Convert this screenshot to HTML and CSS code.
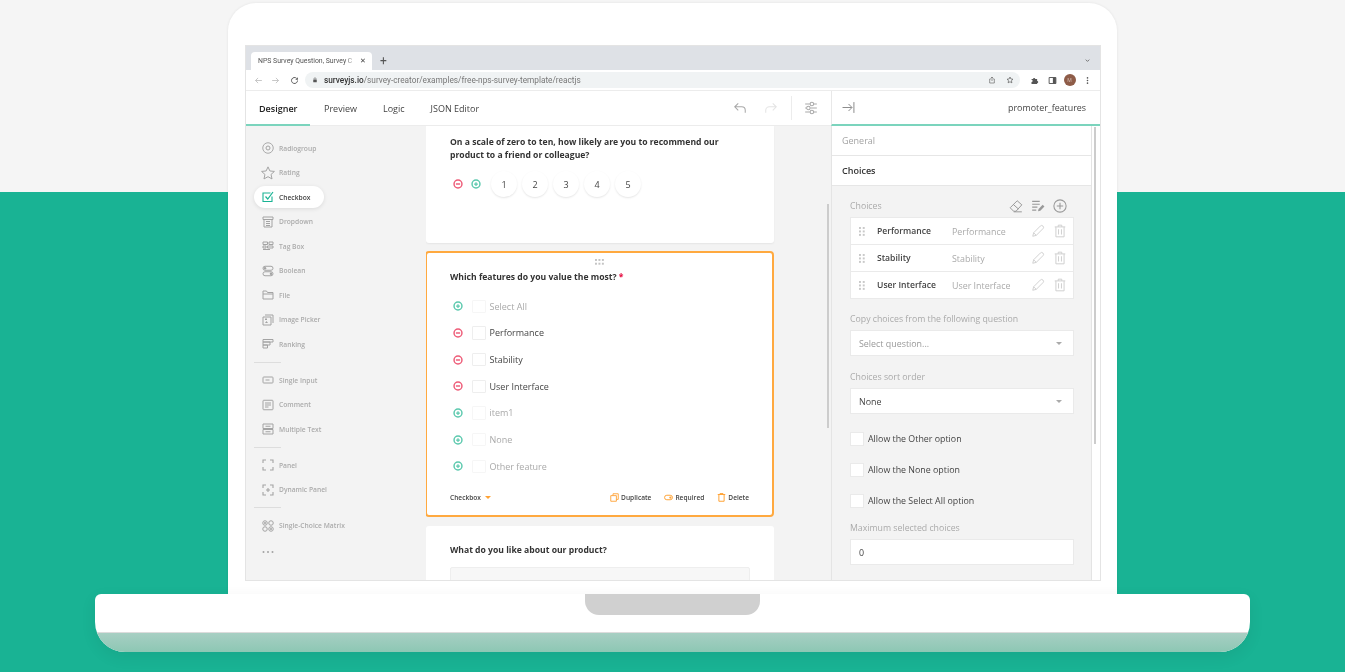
FILE: index.html
```html
<!DOCTYPE html>
<html lang="en">
<head>
<meta charset="utf-8">
<title>NPS Survey Question, Survey Creator</title>
<link rel="stylesheet" href="styles.css">
</head>
<body>
<svg class="defs" aria-hidden="true">
  <symbol id="i-plus" viewBox="0 0 24 24"><circle cx="12" cy="12" r="9.5" fill="none" stroke="currentColor" stroke-width="3.5"/><path d="M7.500 12h9M12 7.500v9" stroke="currentColor" stroke-width="3"/></symbol>
  <symbol id="i-minus" viewBox="0 0 24 24"><circle cx="12" cy="12" r="9.500" fill="none" stroke="currentColor" stroke-width="3.500"/><path d="M7 12h10" stroke="currentColor" stroke-width="3.500"/></symbol>
  <symbol id="i-radio" viewBox="0 0 24 24"><circle cx="12" cy="12" r="10.500" fill="none" stroke="currentColor" stroke-width="1.800"/><circle cx="12" cy="12" r="4" fill="none" stroke="currentColor" stroke-width="2"/></symbol>
  <symbol id="i-star" viewBox="0 0 24 24"><path d="M12 1.500l3.200 7 7.800.8-5.800 5.200 1.700 7.700L12 18.300l-6.900 3.900 1.700-7.700L1 9.300l7.800-.8z" fill="none" stroke="currentColor" stroke-width="1.700"/></symbol>
  <symbol id="i-check" viewBox="0 0 24 24"><path d="M20 11v10H2V4h15" fill="none" stroke="currentColor" stroke-width="2.200"/><path d="M7 11l4.500 5L22 2" fill="none" stroke="currentColor" stroke-width="2.400"/></symbol>
  <symbol id="i-drop" viewBox="0 0 24 24"><path d="M2 2h20v5H2zM4 7v15h16V7M8 11h8M8 15h8M8 19h8" fill="none" stroke="currentColor" stroke-width="2"/></symbol>
  <symbol id="i-tag" viewBox="0 0 24 24"><path d="M2 4h9v5H2zM14 4h8v5h-8zM2 12h6v4H2zM11 12h11v4H11zM2 19h14" fill="none" stroke="currentColor" stroke-width="2"/></symbol>
  <symbol id="i-bool" viewBox="0 0 24 24"><rect x="2" y="2.500" width="20" height="8" rx="4" fill="none" stroke="currentColor" stroke-width="2"/><rect x="2" y="13.500" width="20" height="8" rx="4" fill="none" stroke="currentColor" stroke-width="2"/><circle cx="6" cy="6.500" r="2.500" fill="currentColor"/><circle cx="18" cy="17.500" r="2.500" fill="currentColor"/></symbol>
  <symbol id="i-file" viewBox="0 0 24 24"><path d="M2 20V4h7l2 3h11v13zM2 10h20" fill="none" stroke="currentColor" stroke-width="2"/></symbol>
  <symbol id="i-image" viewBox="0 0 24 24"><path d="M2 6h16v16H2zM6 2h16v16" fill="none" stroke="currentColor" stroke-width="2"/><path d="M6 18l3-4 3 4zM6 9h4v3H6z" fill="currentColor"/></symbol>
  <symbol id="i-rank" viewBox="0 0 24 24"><path d="M2 3h20v5H2zM2 8h14v6H2zM2 14h9v6H2z" fill="none" stroke="currentColor" stroke-width="2"/></symbol>
  <symbol id="i-input" viewBox="0 0 24 24"><rect x="2" y="6" width="20" height="12" rx="1.500" fill="none" stroke="currentColor" stroke-width="2"/><path d="M7 12h8" stroke="currentColor" stroke-width="2"/></symbol>
  <symbol id="i-comment" viewBox="0 0 24 24"><rect x="2" y="2.500" width="20" height="19" rx="1.500" fill="none" stroke="currentColor" stroke-width="2"/><path d="M6 8h12M6 12h12M6 16h7" stroke="currentColor" stroke-width="2"/></symbol>
  <symbol id="i-multi" viewBox="0 0 24 24"><path d="M2 2h20v9H2zM2 13h20v9H2zM7 6.500h10M7 17.500h10" fill="none" stroke="currentColor" stroke-width="2"/></symbol>
  <symbol id="i-panel" viewBox="0 0 24 24"><path d="M2 8V2h6M16 2h6v6M22 16v6h-6M8 22H2v-6" fill="none" stroke="currentColor" stroke-width="2.200"/></symbol>
  <symbol id="i-dynamic" viewBox="0 0 24 24"><path d="M2 8V2h6M16 2h6v6M22 16v6h-6M8 22H2v-6M12 8v8M8 12h8" fill="none" stroke="currentColor" stroke-width="2.200"/></symbol>
  <symbol id="i-matrix" viewBox="0 0 24 24"><g fill="none" stroke="currentColor" stroke-width="2"><circle cx="6" cy="6" r="4.500"/><circle cx="18" cy="6" r="4.500"/><circle cx="6" cy="18" r="4.500"/><circle cx="18" cy="18" r="4.500"/></g><circle cx="6" cy="6" r="2" fill="currentColor"/><circle cx="18" cy="18" r="2" fill="currentColor"/></symbol>
  <symbol id="i-more" viewBox="0 0 24 24"><circle cx="3" cy="12" r="2" fill="currentColor"/><circle cx="12" cy="12" r="2" fill="currentColor"/><circle cx="21" cy="12" r="2" fill="currentColor"/></symbol>
  <symbol id="i-back" viewBox="0 0 24 24"><path d="M21 12H4M11 5l-7 7 7 7" fill="none" stroke="currentColor" stroke-width="2"/></symbol>
  <symbol id="i-fwd" viewBox="0 0 24 24"><path d="M3 12h17M13 5l7 7-7 7" fill="none" stroke="currentColor" stroke-width="2"/></symbol>
  <symbol id="i-reload" viewBox="0 0 24 24"><path d="M20 12a8 8 0 1 1-2.500-5.800" fill="none" stroke="currentColor" stroke-width="2.500"/><path d="M21 3v7h-7z" fill="currentColor"/></symbol>
  <symbol id="i-lock" viewBox="0 0 24 24"><rect x="5" y="10" width="14" height="11" rx="1.500" fill="currentColor"/><path d="M8 10V7a4 4 0 0 1 8 0v3" fill="none" stroke="currentColor" stroke-width="2.200"/></symbol>
  <symbol id="i-share" viewBox="0 0 24 24"><path d="M8 9H5v12h14V9h-3M12 15V3M8 7l4-4 4 4" fill="none" stroke="currentColor" stroke-width="2"/></symbol>
  <symbol id="i-bm" viewBox="0 0 24 24"><path d="M12 3l2.700 6 6.300.7-4.700 4.300 1.300 6.500-5.600-3.300-5.600 3.300L7.700 14 3 9.700 9.300 9z" fill="none" stroke="currentColor" stroke-width="2"/></symbol>
  <symbol id="i-puzzle" viewBox="0 0 24 24"><path d="M4 8h4a3 3 0 1 1 6 0h5v5a3 3 0 1 1 0 6v2H4v-5a3 3 0 1 0 0-6z" fill="currentColor"/></symbol>
  <symbol id="i-side" viewBox="0 0 24 24"><path d="M3 4h18v16H3z" fill="none" stroke="currentColor" stroke-width="2.500"/><path d="M13 4h8v16h-8z" fill="currentColor"/></symbol>
  <symbol id="i-kebab" viewBox="0 0 24 24"><circle cx="12" cy="5" r="2.200" fill="currentColor"/><circle cx="12" cy="12" r="2.200" fill="currentColor"/><circle cx="12" cy="19" r="2.200" fill="currentColor"/></symbol>
  <symbol id="i-chev" viewBox="0 0 24 24"><path d="M6 9l6 6 6-6" fill="none" stroke="currentColor" stroke-width="3"/></symbol>
  <symbol id="i-undo" viewBox="0 0 24 24"><path d="M9 4L3 10l6 6M3 10h12a6 6 0 0 1 6 6v4" fill="none" stroke="currentColor" stroke-width="1.800"/></symbol>
  <symbol id="i-redo" viewBox="0 0 24 24"><path d="M15 4l6 6-6 6M21 10H9a6 6 0 0 0-6 6v4" fill="none" stroke="currentColor" stroke-width="1.800"/></symbol>
  <symbol id="i-sliders" viewBox="0 0 24 24"><g fill="none" stroke="currentColor" stroke-width="1.800"><path d="M2 5h8M17 5h5M2 12h2M11 12h11M2 19h8M17 19h5"/><circle cx="13.500" cy="5" r="3"/><circle cx="7.500" cy="12" r="3"/><circle cx="13.500" cy="19" r="3"/></g></symbol>
  <symbol id="i-collapse" viewBox="0 0 24 24"><path d="M1 12h17M12 5.500l6.500 6.500-6.500 6.500M22 2v20" fill="none" stroke="currentColor" stroke-width="1.800"/></symbol>
  <symbol id="i-eraser" viewBox="0 0 24 24"><path d="M14 3l8 7-10 11H8l-6-6zM7 9l9 8M8 22h14" fill="none" stroke="currentColor" stroke-width="1.700"/></symbol>
  <symbol id="i-list" viewBox="0 0 24 24"><path d="M2 4h13M2 9h13M2 14h9M2 19h7" fill="none" stroke="currentColor" stroke-width="2"/><path d="M12 21l1-4 7-7 3 3-7 7z" fill="currentColor"/></symbol>
  <symbol id="i-add" viewBox="0 0 24 24"><circle cx="12" cy="12" r="10.500" fill="none" stroke="currentColor" stroke-width="1.800"/><path d="M12 6.500v11M6.500 12h11" stroke="currentColor" stroke-width="1.800"/></symbol>
  <symbol id="i-pencil" viewBox="0 0 24 24"><path d="M3 21l1.500-6L16 3.500a3 3 0 0 1 4.500 4.500L9 19.500zM4.500 15L9 19.500" fill="none" stroke="currentColor" stroke-width="1.600"/></symbol>
  <symbol id="i-trash" viewBox="0 0 24 24"><path d="M3 5h18M9 5V2h6v3M5 5v17h14V5M9.500 9v9M14.500 9v9" fill="none" stroke="currentColor" stroke-width="1.700"/></symbol>
  <symbol id="i-drag" viewBox="0 0 8 12"><g fill="currentColor"><rect width="2.600" height="2.600"/><rect x="5" width="2.600" height="2.600"/><rect y="4.600" width="2.600" height="2.600"/><rect x="5" y="4.600" width="2.600" height="2.600"/><rect y="9.200" width="2.600" height="2.600"/><rect x="5" y="9.200" width="2.600" height="2.600"/></g></symbol>
  <symbol id="i-hdrag" viewBox="0 0 12 8"><g fill="currentColor"><rect width="2.600" height="2.600"/><rect x="4.600" width="2.600" height="2.600"/><rect x="9.200" width="2.600" height="2.600"/><rect y="5" width="2.600" height="2.600"/><rect x="4.600" y="5" width="2.600" height="2.600"/><rect x="9.200" y="5" width="2.600" height="2.600"/></g></symbol>
  <symbol id="i-copy" viewBox="0 0 24 24"><path d="M8 7V2h14v15h-5M2 7h15v15H2z" fill="none" stroke="currentColor" stroke-width="2.400"/></symbol>
  <symbol id="i-toggle" viewBox="0 0 24 24"><rect x="1.500" y="6" width="21" height="12" rx="6" fill="none" stroke="currentColor" stroke-width="2.600"/><circle cx="17" cy="12" r="3" fill="currentColor"/></symbol>
  <symbol id="i-del" viewBox="0 0 24 24"><path d="M2 4h20M8 4V1.500h8V4M5 4v18h14V4" fill="none" stroke="currentColor" stroke-width="2.600"/></symbol>
</svg>

<div class="laptop">
  <div class="lid">
    <div class="screen">
      <div class="tabstrip">
        <div class="tab">
          <span class="tab-title">NPS Survey Question, Survey C</span>
          <span class="tab-close">✕</span>
        </div>
        <span class="tab-new">+</span>
        <svg class="ic-chev"><use href="#i-chev"/></svg>
      </div>
      <div class="toolbar">
        <svg class="ic-nav dim"><use href="#i-back"/></svg>
        <svg class="ic-nav dim"><use href="#i-fwd"/></svg>
        <svg class="ic-nav ic-reload"><use href="#i-reload"/></svg>
        <div class="url">
          <svg class="ic-lock"><use href="#i-lock"/></svg>
          <span class="url-text"><b>surveyjs.io</b>/survey-creator/examples/free-nps-survey-template/reactjs</span>
          <svg class="ic-share"><use href="#i-share"/></svg>
          <svg class="ic-bm"><use href="#i-bm"/></svg>
        </div>
        <div class="tb-right">
          <svg class="ic-tb"><use href="#i-puzzle"/></svg>
          <svg class="ic-tb ic-side"><use href="#i-side"/></svg>
          <span class="avatar">M</span>
          <svg class="ic-tb"><use href="#i-kebab"/></svg>
        </div>
      </div>

      <div class="appbar">
        <div class="appbar-left">
          <a class="nav nav-active">Designer</a>
          <a class="nav nav-preview">Preview</a>
          <a class="nav nav-logic">Logic</a>
          <a class="nav nav-json">JSON Editor</a>
          <div class="tools">
            <svg class="ic-tool"><use href="#i-undo"/></svg>
            <svg class="ic-tool faint"><use href="#i-redo"/></svg>
            <span class="tool-sep"></span>
            <svg class="ic-tool"><use href="#i-sliders"/></svg>
          </div>
        </div>
        <div class="appbar-right">
          <svg class="ic-collapse"><use href="#i-collapse"/></svg>
          <span class="prop-name">promoter_features</span>
        </div>
      </div>

      <div class="main">
        <aside class="toolbox">
          <div class="tool-item"><svg class="ic"><use href="#i-radio"/></svg><span>Radiogroup</span></div>
          <div class="tool-item"><svg class="ic ic-star"><use href="#i-star"/></svg><span>Rating</span></div>
          <div class="tool-item tool-on"><svg class="ic"><use href="#i-check"/></svg><span>Checkbox</span></div>
          <div class="tool-item"><svg class="ic"><use href="#i-drop"/></svg><span>Dropdown</span></div>
          <div class="tool-item"><svg class="ic"><use href="#i-tag"/></svg><span>Tag Box</span></div>
          <div class="tool-item"><svg class="ic"><use href="#i-bool"/></svg><span>Boolean</span></div>
          <div class="tool-item"><svg class="ic"><use href="#i-file"/></svg><span>File</span></div>
          <div class="tool-item"><svg class="ic"><use href="#i-image"/></svg><span>Image Picker</span></div>
          <div class="tool-item"><svg class="ic"><use href="#i-rank"/></svg><span>Ranking</span></div>
          <div class="tool-sepline"></div>
          <div class="tool-item"><svg class="ic"><use href="#i-input"/></svg><span>Single Input</span></div>
          <div class="tool-item"><svg class="ic"><use href="#i-comment"/></svg><span>Comment</span></div>
          <div class="tool-item"><svg class="ic"><use href="#i-multi"/></svg><span>Multiple Text</span></div>
          <div class="tool-sepline"></div>
          <div class="tool-item"><svg class="ic"><use href="#i-panel"/></svg><span>Panel</span></div>
          <div class="tool-item"><svg class="ic"><use href="#i-dynamic"/></svg><span>Dynamic Panel</span></div>
          <div class="tool-sepline"></div>
          <div class="tool-item"><svg class="ic"><use href="#i-matrix"/></svg><span>Single-Choice Matrix</span></div>
          <div class="tool-item tool-more"><svg class="ic"><use href="#i-more"/></svg></div>
        </aside>

        <section class="canvas">
          <div class="cards">
            <div class="card card-rate">
              <h3 class="q-title">On a scale of zero to ten, how likely are you to recommend our product to a friend or colleague?</h3>
              <div class="rate-row">
                <svg class="ic-op red"><use href="#i-minus"/></svg>
                <svg class="ic-op green"><use href="#i-plus"/></svg>
                <div class="rates">
                  <span class="rate">1</span><span class="rate">2</span><span class="rate">3</span><span class="rate">4</span><span class="rate">5</span>
                </div>
              </div>
            </div>

            <div class="card card-sel">
              <div class="handle"><svg class="ic-hdrag"><use href="#i-hdrag"/></svg></div>
              <h3 class="q-title">Which features do you value the most? <span class="req">*</span></h3>
              <div class="options">
                <div class="opt off"><svg class="ic-op green"><use href="#i-plus"/></svg><span class="box"></span><span>Select All</span></div>
                <div class="opt"><svg class="ic-op red"><use href="#i-minus"/></svg><span class="box"></span><span>Performance</span></div>
                <div class="opt"><svg class="ic-op red"><use href="#i-minus"/></svg><span class="box"></span><span>Stability</span></div>
                <div class="opt"><svg class="ic-op red"><use href="#i-minus"/></svg><span class="box"></span><span>User Interface</span></div>
                <div class="opt off"><svg class="ic-op green"><use href="#i-plus"/></svg><span class="box"></span><span>item1</span></div>
                <div class="opt off"><svg class="ic-op green"><use href="#i-plus"/></svg><span class="box"></span><span>None</span></div>
                <div class="opt off"><svg class="ic-op green"><use href="#i-plus"/></svg><span class="box"></span><span>Other feature</span></div>
              </div>
              <div class="card-foot">
                <span class="foot-type">Checkbox</span><span class="caret-orange"></span>
                <span class="foot-act act-dup"><svg class="ic-act"><use href="#i-copy"/></svg>Duplicate</span>
                <span class="foot-act act-req"><svg class="ic-act"><use href="#i-toggle"/></svg>Required</span>
                <span class="foot-act act-del"><svg class="ic-act"><use href="#i-del"/></svg>Delete</span>
              </div>
            </div>

            <div class="card card-text">
              <h3 class="q-title">What do you like about our product?</h3>
              <div class="textarea"></div>
            </div>
          </div>
          <div class="canvas-lane"><div class="canvas-thumb"></div></div>
        </section>

        <aside class="props">
          <div class="props-col">
            <div class="sec sec-off">General</div>
            <div class="sec">Choices</div>
            <div class="sec-body">
              <div class="field-head">
                <span class="label">Choices</span>
                <div class="head-icons">
                  <svg class="ic-head"><use href="#i-eraser"/></svg>
                  <svg class="ic-head"><use href="#i-list"/></svg>
                  <svg class="ic-head"><use href="#i-add"/></svg>
                </div>
              </div>
              <div class="choice-list">
                <div class="choice"><svg class="ic-drag"><use href="#i-drag"/></svg><span class="c-name">Performance</span><span class="c-val">Performance</span><svg class="ic-row"><use href="#i-pencil"/></svg><svg class="ic-row"><use href="#i-trash"/></svg></div>
                <div class="choice"><svg class="ic-drag"><use href="#i-drag"/></svg><span class="c-name">Stability</span><span class="c-val">Stability</span><svg class="ic-row"><use href="#i-pencil"/></svg><svg class="ic-row"><use href="#i-trash"/></svg></div>
                <div class="choice"><svg class="ic-drag"><use href="#i-drag"/></svg><span class="c-name">User Interface</span><span class="c-val">User Interface</span><svg class="ic-row"><use href="#i-pencil"/></svg><svg class="ic-row"><use href="#i-trash"/></svg></div>
              </div>
              <div class="label label-copy">Copy choices from the following question</div>
              <div class="select ph"><span>Select question...</span><i class="caret"></i></div>
              <div class="label label-block">Choices sort order</div>
              <div class="select"><span>None</span><i class="caret"></i></div>
              <div class="checks">
                <div class="chk"><span class="chk-box"></span>Allow the Other option</div>
                <div class="chk"><span class="chk-box"></span>Allow the None option</div>
                <div class="chk"><span class="chk-box"></span>Allow the Select All option</div>
              </div>
              <div class="label label-max">Maximum selected choices</div>
              <div class="select"><span>0</span></div>
            </div>
          </div>
          <div class="props-lane"><div class="props-thumb"></div></div>
        </aside>
      </div>
    </div>
  </div>
  <div class="base">
    <div class="notch"></div>
    <div class="base-strip"></div>
  </div>
</div>
</body>
</html>
```

FILE: styles.css
```css
* { box-sizing: border-box; }
html, body { margin: 0; height: 672px; overflow: hidden; }
body {
  background: linear-gradient(#f5f5f5 0, #f5f5f5 192px, #19b394 192px, #19b394 100%);
  font-family: "Open Sans", "Noto Sans", sans-serif;
  color: #333;
}
.defs { display: none; }
svg { display: block; flex: none; }

.laptop { display: flex; flex-direction: column; align-items: center; padding-top: 3px; }
.lid {
  width: 889px; height: 591px; background: #fff;
  border-radius: 28px 28px 0 0;
  padding: 42px 17px 0;
  box-shadow: 0 0 3px rgba(0,0,0,.08);
}
.screen {
  width: 856px; height: 536px; border: 1px solid #e4e4e4;
  background: #fff; display: flex; flex-direction: column; overflow: hidden;
  filter: blur(.35px);
}
.base {
  width: 1155px; height: 58px; background: #fff;
  border-radius: 6px 6px 30px 30px; overflow: hidden;
  display: flex; flex-direction: column; justify-content: space-between; align-items: center;
  box-shadow: 0 5px 16px rgba(0,0,0,.07);
}
.notch { width: 175px; height: 21px; background: #d0d0d0; border-radius: 0 0 14px 14px; }
.base-strip { width: 100%; height: 20px; background: linear-gradient(#a7cfc3, #8dc7b4); border-top: 1px solid #dcdcdc; }

/* browser chrome */
.tabstrip { height: 24px; flex: none; background: #dee1e6; display: flex; align-items: flex-end; padding-left: 5px; font-family: "Roboto", sans-serif; }
.tab { width: 121px; height: 18px; background: #fff; border-radius: 4px 4px 0 0; display: flex; align-items: center; padding: 0 6px 0 7px; }
.tab-title { width: 99px; font-size: 6.9px; color: #555; white-space: nowrap; overflow: hidden; -webkit-mask-image: linear-gradient(90deg, #000 88%, transparent); mask-image: linear-gradient(90deg, #000 88%, transparent); }
.tab-close { font-size: 6.5px; color: #444; margin-left: 3px; }
.tab-new { font-size: 12px; line-height: 18px; height: 18px; color: #555; margin-left: 8px; }
.ic-chev { width: 7px; height: 7px; color: #666; margin: 0 9px 6px auto; }

.toolbar { height: 21px; flex: none; display: flex; align-items: center; padding: 0 0 0 8px; border-bottom: 1px solid #ececec; gap: 8px; }
.ic-nav { width: 9px; height: 9px; color: #555; }
.ic-nav.dim { color: #b5b5b5; }
.ic-reload { margin-left: 2px; }
.url { margin-left: -2px; width: 715px; flex: none; height: 16px; border-radius: 8px; background: #f0f3f4; display: flex; align-items: center; padding: 0 6px 0 7px; font-family: "Roboto", sans-serif; }
.ic-lock { width: 6px; height: 6px; color: #555; margin-right: 6px; }
.url-text { font-size: 8.25px; color: #777; flex: 1; white-space: nowrap; }
.url-text b { font-weight: 500; color: #333; }
.ic-share { width: 8px; height: 8px; color: #666; margin-right: 10px; }
.ic-bm { width: 8px; height: 8px; color: #555; }
.tb-right { display: flex; align-items: center; gap: 7px; margin-left: 1.500px; }
.ic-tb { width: 9px; height: 9px; color: #555; }
.ic-side { margin-left: 2px; }
.avatar { width: 12px; height: 12px; border-radius: 50%; background: #8e5c48; color: #d9c2b8; font-size: 5px; display: flex; align-items: center; justify-content: center; }

/* app bar */
.appbar { height: 35px; flex: none; display: flex; font-size: 9px; color: #444; }
.appbar-left { width: 585px; display: flex; align-items: center; border-bottom: 1.5px solid #ececec; position: relative; }
.nav { height: 100%; display: flex; align-items: center; padding-top: 1px; }
.nav-active { width: 64px; padding-left: 13px; font-weight: 600; color: #222; border-bottom: 2px solid #7bd4bd; margin-bottom: -1.5px; height: 35px; }
.nav-preview { margin-left: 14px; }
.nav-logic { margin-left: 26px; }
.nav-json { margin-left: 26px; }
.tools { margin-left: auto; display: flex; align-items: center; padding-right: 13px; }
.ic-tool { width: 14px; height: 14px; color: #a9a9a9; margin-left: 17px; }
.ic-tool.faint { color: #e4e4e4; }
.tool-sep { width: 1px; height: 24px; background: #ececec; margin-left: 13px; margin-right: -5px; }
.appbar-right { flex: 1; display: flex; align-items: center; justify-content: space-between; padding: 0 14px 0 10px; border-left: 1px solid #e8e8e8; border-bottom: 2px solid #7bd4bd; }
.ic-collapse { width: 13px; height: 13px; color: #8a8a8a; }
.prop-name { color: #444; font-size: 8.9px; }

/* main */
.main { flex: 1; min-height: 0; display: flex; overflow: hidden; }
.toolbox { width: 180px; flex: none; background: #f3f3f3; padding: 9.750px 0 0 8px; font-size: 6.7px; font-weight: 600; color: #ababab; }
.tool-item { height: 24.500px; display: flex; align-items: center; gap: 5px; padding-left: 8px; width: 72px; white-space: nowrap; }
.ic { width: 12px; height: 12px; color: #a3a3a3; }
.ic-star { width: 14px; height: 14px; margin: 0 -1px; }
.tool-on { background: #fff; color: #444; border-radius: 12px; height: 22px; margin: 1.250px 0; width: 70px; box-shadow: 0 1px 4px rgba(0,0,0,.1); }
.tool-on .ic { color: #19b394; }
.tool-sepline { height: 11.500px; width: 27px; position: relative; background: linear-gradient(#ddd, #ddd) center / 100% 1px no-repeat; }
.tool-more { margin-top: 1.500px; }

.canvas { flex: 1; min-width: 0; background: #f3f3f3; display: flex; overflow: hidden; }
.cards { width: 348px; flex: none; display: flex; flex-direction: column; }
.card { background: #fff; flex: none; }
.q-title { margin: 0; font-size: 8.6px; font-weight: 700; line-height: 13.500px; color: #333; }
.card-rate { height: 117px; padding: 9.500px 24px 0; border-radius: 0 0 3px 3px; box-shadow: 0 1px 2px rgba(0,0,0,.06); }
.rate-row { display: flex; align-items: center; margin-top: 8.500px; height: 26px; padding-left: 3px; gap: 8px; }
.ic-op { width: 10px; height: 10px; }
.red { color: #ee5c78; }
.green { color: #5cc9ae; }
.rates { display: flex; gap: 5px; margin-left: 2px; }
.rate { width: 26px; height: 26px; border-radius: 50%; background: #fff; box-shadow: 0 1px 2px rgba(0,0,0,.1); display: flex; align-items: center; justify-content: center; font-size: 9px; color: #444; }

.card-sel { height: 266px; margin: 8px 0 0 -1px; border: 2px solid #ffa93f; border-radius: 4px; padding: 0 23px 0 23px; }
.handle { height: 17px; display: flex; justify-content: center; align-items: center; }
.ic-hdrag { width: 9px; height: 6px; color: #c4c4c4; }
.card-sel .q-title { line-height: 15px; }
.req { color: #e50a3e; }
.options { margin-top: 8px; }
.opt { height: 26.670px; display: flex; align-items: center; padding-left: 3px; font-size: 9px; color: #444; }
.opt .ic-op { margin-right: 9px; }
.opt.off { color: #a9a9a9; }
.box { width: 13.500px; height: 13.500px; background: #fff; border: 1px solid #eee; border-radius: 1px; margin-right: 4px; }
.opt.off .box { border-color: #f6f6f6; }
.card-foot { margin-top: 8.500px; height: 18px; display: flex; align-items: center; font-size: 6.6px; font-weight: 600; color: #444; }
.foot-type { margin-right: 4px; }
.caret-orange { width: 0; height: 0; border: 3px solid transparent; border-top: 3px solid #ffa234; border-bottom: 0; }
.foot-act { display: flex; align-items: center; gap: 2px; }
.act-dup { margin-left: auto; }
.act-req { margin-left: 13px; }
.act-del { margin-left: 13px; }
.ic-act { width: 9px; height: 9px; color: #ffa234; }

.card-text { margin-top: 9px; flex: 1; padding: 18px 24px 0; border-radius: 3px 3px 0 0; }
.textarea { height: 60px; margin-top: 9px; background: #f7f7f7; border: 1px solid #eee; border-radius: 2px; }

.canvas-lane { margin-left: 53px; padding-top: 78px; }
.canvas-thumb { width: 2px; height: 224px; background: #ccc; }

/* property grid */
.props { width: 269px; flex: none; display: flex; background: #fff; }
.props-col { width: 261px; border-left: 1px solid #e4e4e4; border-right: 1px solid #e4e4e4; display: flex; flex-direction: column; }
.sec { height: 30px; flex: none; display: flex; align-items: center; padding-left: 10px; font-size: 9px; font-weight: 600; color: #333; border-bottom: 1px solid #e6e6e6; }
.sec-off { color: #a3a3a3; font-weight: 400; padding-bottom: 1px; }
.sec-body { flex: 1; background: #f3f3f3; padding: 13px 17.500px 0 18px; font-size: 8.6px; }
.label { color: #aaa; line-height: 14px; font-size: 8.75px; }
.field-head { display: flex; align-items: center; justify-content: space-between; height: 14px; margin-bottom: 4px; }
.head-icons { display: flex; gap: 8px; padding-right: 7px; }
.ic-head { width: 14px; height: 14px; color: #999; }
.choice-list { border: 1px solid #eaeaea; }
.choice { height: 27px; background: #fff; display: grid; grid-template-columns: 26px 75px 75px 22px 22px; align-items: center; border-bottom: 1px solid #eaeaea; }
.choice:last-child { border-bottom: 0; height: 26px; }
.ic-drag { width: 6px; height: 9px; color: #c9c9c9; margin-left: 8px; }
.c-name { color: #444; font-weight: 600; white-space: nowrap; }
.c-val { color: #aaa; white-space: nowrap; font-size: 8.9px; }
.ic-row { width: 14px; height: 14px; color: #cfcfcf; margin: 0 auto; }
.label-copy { margin-top: 13px; }
.label-block { margin-top: 14px; }
.select { height: 26px; margin-top: 4px; background: #fff; border: 1px solid #eaeaea; display: flex; align-items: center; justify-content: space-between; padding: 0 11px 0 8px; color: #444; font-size: 8.9px; }
.select.ph { color: #999; }
.caret { width: 0; height: 0; border: 3px solid transparent; border-top: 3px solid #aaa; border-bottom: 0; }
.checks { margin-top: 18px; display: flex; flex-direction: column; gap: 17px; }
.chk { height: 14px; display: flex; align-items: center; gap: 4px; color: #444; font-size: 8.85px; }
.chk-box { width: 14px; height: 14px; background: #fff; border: 1px solid #eaeaea; }
.label-max { margin-top: 13px; }
.props-lane { flex: 1; padding: 1px 0 0 2px; }
.props-thumb { width: 2px; height: 317px; background: #ccc; }
```
